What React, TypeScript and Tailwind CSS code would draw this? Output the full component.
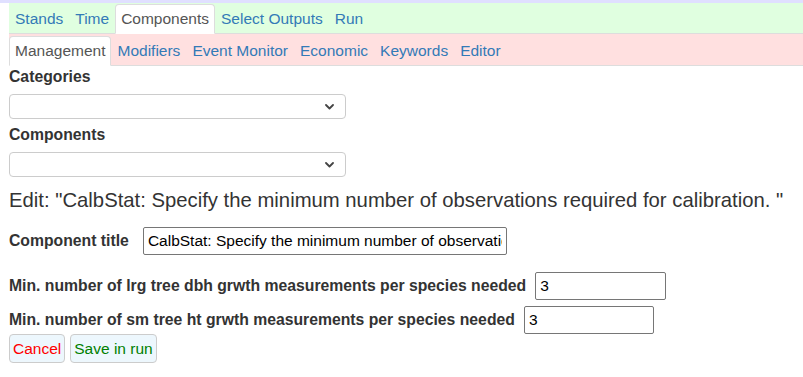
import React from 'react';

const mainTabs = ['Stands', 'Time', 'Components', 'Select Outputs', 'Run'];
const subTabs = ['Management', 'Modifiers', 'Event Monitor', 'Economic', 'Keywords', 'Editor'];

function Tab({ label, active }: { label: string; active: boolean }) {
  return (
    <a
      href="#"
      className={
        active
          ? '-mb-px flex h-[30px] items-center rounded-t-[4px] border border-[#ddd] border-b-transparent bg-white px-[5px] pb-[1px] text-[#555]'
          : '-mb-px flex h-[30px] items-center rounded-t-[4px] border border-transparent px-[5px] pb-[1px] text-[#337ab7]'
      }
    >
      {label}
    </a>
  );
}

function Chevron() {
  return (
    <svg width="9" height="6" viewBox="0 0 9 6" fill="none">
      <path d="M1 1l3.5 3.5L8 1" stroke="#444" strokeWidth="1.8" strokeLinecap="round" strokeLinejoin="round" />
    </svg>
  );
}

function EmptySelect() {
  return (
    <div className="flex h-[25px] w-[337px] items-center justify-end rounded-[4px] border border-[#ccc] bg-white pr-[11px]">
      <Chevron />
    </div>
  );
}

export default function App() {
  return (
    <div
      className="min-h-screen bg-white text-[15.5px] text-[#333]"
      style={{ fontFamily: '"Liberation Sans", Arial, sans-serif' }}
    >
      <div className="h-[3px] bg-[#e0e0ff]" />
      <div className="ml-[9px]">
        <nav className="flex h-[31px] items-end border-b border-[#ddd] bg-[#e0ffe0]">
          {mainTabs.map((t) => (
            <Tab key={t} label={t} active={t === 'Components'} />
          ))}
        </nav>
        <nav className="flex h-[32px] items-end border-b border-[#ddd] bg-[#ffe0e0]">
          {subTabs.map((t) => (
            <Tab key={t} label={t} active={t === 'Management'} />
          ))}
        </nav>
      </div>

      <div className="pl-[9px]">
        <div className="mb-[6px] text-[15.75px] font-bold leading-[22px]">Categories</div>
        <EmptySelect />
        <div className="mt-[5px] mb-[6px] text-[15.75px] font-bold leading-[22px]">Components</div>
        <EmptySelect />

        <h4 className="mt-[12px] text-[20.3px] leading-[22px] text-[#333]">
          Edit: "CalbStat: Specify the minimum number of observations required for calibration. "
        </h4>

        <div className="mt-[16px] flex items-center gap-[14px]">
          <label className="text-[15.75px] font-bold">Component title</label>
          <input
            readOnly
            value="CalbStat: Specify the minimum number of observations required for calibration."
            className="h-[28px] w-[364px] rounded-[2px] border border-[#767676] px-[4px] text-black outline-none"
          />
        </div>

        <div className="mt-[17px] flex items-center gap-[9px]">
          <label className="text-[15.75px] font-bold">
            Min. number of lrg tree dbh grwth measurements per species needed
          </label>
          <input
            readOnly
            value="3"
            className="h-[28px] w-[131px] rounded-[2px] border border-[#767676] px-[4px] text-black outline-none"
          />
        </div>

        <div className="mt-[6px] flex items-center gap-[9px]">
          <label className="text-[15.75px] font-bold">
            Min. number of sm tree ht grwth measurements per species needed
          </label>
          <input
            readOnly
            value="3"
            className="h-[28px] w-[130px] rounded-[2px] border border-[#767676] px-[4px] text-black outline-none"
          />
        </div>

        <div className="flex gap-[5px]">
          <button className="h-[29px] rounded-[4px] border border-[#ccc] bg-[#edf7fd] px-[3px] text-[#ff0000]">
            Cancel
          </button>
          <button className="h-[29px] rounded-[4px] border border-[#ccc] bg-[#edf7fd] px-[3px] text-[#008000]">
            Save in run
          </button>
        </div>
      </div>
    </div>
  );
}
